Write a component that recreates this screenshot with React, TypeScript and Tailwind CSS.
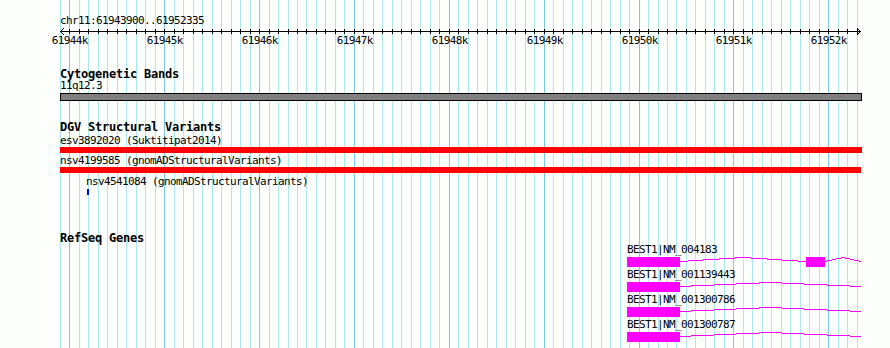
const START = 61943900;
const PX_PER_BP = 0.094875;
const ORIGIN = 59.8;

const bpToX = (bp: number) => ORIGIN + (bp - START) * PX_PER_BP;

// one grid line per 100 bp, a darker one per kb
const gridLines = Array.from({ length: 85 }, (_, k) => ({
  x: Math.round(ORIGIN + k * 9.4875),
  major: (k - 1) % 10 === 0,
}));

const kbLabels = Array.from({ length: 9 }, (_, i) => ({
  label: `${61944 + i}k`,
  x: Math.round(bpToX(61944000 + i * 1000)),
}));

interface GeneRow {
  name: string;
  exons: [number, number][];
  introns: [number, number][][];
}

const genes: GeneRow[] = [
  {
    name: "BEST1|NM_004183",
    exons: [
      [627, 680],
      [806, 825],
    ],
    introns: [
      [
        [680, 4.5],
        [743, 0.5],
        [806, 4.5],
      ],
      [
        [825, 4.5],
        [843, 0.5],
        [861, 4.5],
      ],
    ],
  },
  {
    name: "BEST1|NM_001139443",
    exons: [[627, 680]],
    introns: [
      [
        [680, 4.5],
        [770, 0.5],
        [861, 4.5],
      ],
    ],
  },
  {
    name: "BEST1|NM_001300786",
    exons: [[627, 680]],
    introns: [
      [
        [680, 4.5],
        [770, 0.5],
        [861, 4.5],
      ],
    ],
  },
  {
    name: "BEST1|NM_001300787",
    exons: [[627, 680]],
    introns: [
      [
        [680, 4.5],
        [770, 0.5],
        [861, 4.5],
      ],
    ],
  },
];

const TrackTitle = ({ children, className = "" }: { children: string; className?: string }) => (
  <div className={`h-[11px] leading-[11px] pl-[60px] text-[12px] font-bold tracking-[-0.22px] whitespace-nowrap ${className}`}>
    {children}
  </div>
);

const Label = ({ children, className = "" }: { children: string; className?: string }) => (
  <div className={`h-[12px] leading-[12px] text-[11px] tracking-[-0.62px] whitespace-nowrap ${className}`}>
    {children}
  </div>
);

const Ruler = () => (
  <svg width={890} height={21} className="block" shapeRendering="crispEdges">
    <line x1={60} y1={4.5} x2={861} y2={4.5} stroke="#000" />
    <polyline points="64,1 60.5,4.5 64,8" fill="none" stroke="#000" />
    <polyline points="857,1 860.5,4.5 857,8" fill="none" stroke="#000" />
    {gridLines.slice(1).map((g) => (
      <line key={g.x} x1={g.x + 0.5} y1={2} x2={g.x + 0.5} y2={7} stroke="#000" />
    ))}
    {kbLabels.map((k) => (
      <text key={k.label} x={k.x + 0.8} y={17} fontSize={11} letterSpacing={-0.62} textAnchor="middle" fill="#000">
        {k.label}
      </text>
    ))}
  </svg>
);

const Gene = ({ gene, first }: { gene: GeneRow; first: boolean }) => (
  <div className={first ? "mt-[1px]" : "mt-[3px]"}>
    <Label className="relative z-10 -mt-px mb-px pl-[627px]">{gene.name}</Label>
    <svg width={890} height={10} className="block overflow-visible" shapeRendering="crispEdges">
      {gene.introns.map((pts, i) => (
        <polyline
          key={i}
          points={pts.map(([x, y]) => `${x},${y}`).join(" ")}
          fill="none"
          stroke="#ff00ff"
        />
      ))}
      {gene.exons.map(([a, b]) => (
        <rect key={a} x={a} y={0} width={b - a} height={10} fill="#ff00ff" />
      ))}
    </svg>
  </div>
);

export default function App() {
  return (
    <div className="relative w-[890px] h-[348px] overflow-hidden bg-[#fdfffd] text-black font-['DejaVu_Sans_Mono','Liberation_Mono',monospace]">
      <svg width={890} height={348} className="absolute inset-0" shapeRendering="crispEdges">
        {gridLines.map((g) => (
          <line
            key={g.x}
            x1={g.x + 0.5}
            y1={0}
            x2={g.x + 0.5}
            y2={348}
            stroke={g.major ? "#80c6e8" : "#ace8ee"}
          />
        ))}
      </svg>

      <div className="relative flex flex-col">
        <Label className="mt-[15px] pl-[60px]">chr11:61943900..61952335</Label>
        <Ruler />

        <TrackTitle className="mt-[21px]">Cytogenetic Bands</TrackTitle>
        <Label className="pl-[60px]">11q12.3</Label>
        <div className="mt-[1px] ml-[60px] w-[802px] h-[8px] border border-black bg-[#808080]" />

        <TrackTitle className="mt-[21px]">DGV Structural Variants</TrackTitle>
        <Label className="mt-[2px] pl-[60px]">esv3892020 (Suktitipat2014)</Label>
        <div className="ml-[60px] w-[802px] h-[6px] bg-[#ff0000]" />
        <Label className="mt-[2px] pl-[60px]">nsv4199585 (gnomADStructuralVariants)</Label>
        <div className="ml-[60px] w-[801px] h-[6px] bg-[#ff0000]" />
        <Label className="mt-[3px] pl-[86px]">nsv4541084 (gnomADStructuralVariants)</Label>
        <div className="mt-[1px] ml-[87px] w-[2px] h-[6px] bg-[#0000ff]" />

        <TrackTitle className="mt-[38px]">RefSeq Genes</TrackTitle>
        {genes.map((g, i) => (
          <Gene key={g.name} gene={g} first={i === 0} />
        ))}
      </div>
    </div>
  );
}
